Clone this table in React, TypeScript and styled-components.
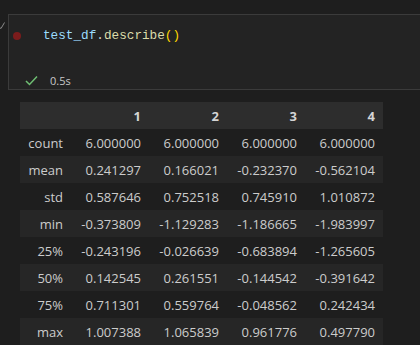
import React from 'react';
import styled, { createGlobalStyle } from 'styled-components';

const GlobalStyle = createGlobalStyle`
  html, body {
    margin: 0;
    padding: 0;
    background: #1e1e1e;
  }
`;

const Page = styled.div`
  position: relative;
  width: 420px;
  height: 345px;
  overflow: hidden;
  background: #1e1e1e;
  padding-top: 14px;
  box-sizing: border-box;
`;

const GutterMark = styled.svg`
  position: absolute;
  left: -2px;
  top: 21px;
`;

const Cell = styled.div`
  margin-left: 8px;
  height: 76px;
  box-sizing: border-box;
  border: 1px solid #3b3b3b;
  border-right: none;
  background: #232323;
  display: flex;
  flex-direction: column;
`;

const CodeRow = styled.div`
  display: flex;
  align-items: center;
  height: 16px;
  margin-top: 13px;
  padding-left: 4px;
`;

const RunDot = styled.span`
  width: 8px;
  height: 8px;
  border-radius: 50%;
  background: #7b1c1c;
  margin-right: 22px;
`;

const Code = styled.code`
  font-family: 'Liberation Mono', 'DejaVu Sans Mono', monospace;
  font-size: 12.7px;
  line-height: 16px;
  white-space: pre;
`;

const Token = styled.span<{ $color: string }>`
  color: ${(p) => p.$color};
`;

const StatusRow = styled.div`
  display: flex;
  align-items: center;
  height: 16px;
  margin-top: 28px;
  padding-left: 16px;
  gap: 12px;
`;

const Elapsed = styled.span`
  font-family: 'Open Sans', 'Noto Sans', sans-serif;
  font-size: 11px;
  color: #c8c8c8;
`;

const Output = styled.div`
  padding: 12px 0 0 20px;
`;

const Table = styled.table`
  border-collapse: collapse;
  font-family: 'Open Sans', 'Noto Sans', sans-serif;
  font-size: 13px;
  color: #cccccc;
`;

const HeadRow = styled.tr`
  background: #2d2d2d;
  height: 27px;
`;

const Row = styled.tr<{ $striped: boolean }>`
  background: ${(p) => (p.$striped ? '#262626' : 'transparent')};
  height: 27px;
`;

const Th = styled.th<{ $index?: boolean }>`
  text-align: right;
  font-weight: 700;
  color: #d4d4d4;
  padding: 0 8px;
  width: ${(p) => (p.$index ? '35px' : '62px')};
  vertical-align: middle;
`;

const Td = styled.td<{ $index?: boolean }>`
  text-align: right;
  padding: 0 8px;
  vertical-align: middle;
  white-space: nowrap;
`;

const columns = ['1', '2', '3', '4'];

const rows: [string, string[]][] = [
  ['count', ['6.000000', '6.000000', '6.000000', '6.000000']],
  ['mean', ['0.241297', '0.166021', '-0.232370', '-0.562104']],
  ['std', ['0.587646', '0.752518', '0.745910', '1.010872']],
  ['min', ['-0.373809', '-1.129283', '-1.186665', '-1.983997']],
  ['25%', ['-0.243196', '-0.026639', '-0.683894', '-1.265605']],
  ['50%', ['0.142545', '0.261551', '-0.144542', '-0.391642']],
  ['75%', ['0.711301', '0.559764', '-0.048562', '0.242434']],
  ['max', ['1.007388', '1.065839', '0.961776', '0.497790']],
];

const App: React.FC = () => {
  return (
    <Page>
      <GlobalStyle />
      <GutterMark width="8" height="8" viewBox="0 0 8 8">
        <path d="M1 6 L3 7.5 L6.5 1.5" stroke="#8a8a8a" strokeWidth="1" fill="none" />
      </GutterMark>
      <Cell>
        <CodeRow>
          <RunDot />
          <Code>
            <Token $color="#9cdcfe">test_df</Token>
            <Token $color="#d4d4d4">.</Token>
            <Token $color="#dcdcaa">describe</Token>
            <Token $color="#ffd700">()</Token>
          </Code>
        </CodeRow>
        <StatusRow>
          <svg width="13" height="11" viewBox="0 0 13 11">
            <path d="M1 6 L4.5 9.5 L12 1.5" stroke="#6fbf73" strokeWidth="1.5" fill="none" />
          </svg>
          <Elapsed>0.5s</Elapsed>
        </StatusRow>
      </Cell>
      <Output>
        <Table>
          <thead>
            <HeadRow>
              <Th $index />
              {columns.map((c) => (
                <Th key={c}>{c}</Th>
              ))}
            </HeadRow>
          </thead>
          <tbody>
            {rows.map(([name, values], i) => (
              <Row key={name} $striped={i % 2 === 1}>
                <Td $index>{name}</Td>
                {values.map((v, j) => (
                  <Td key={j}>{v}</Td>
                ))}
              </Row>
            ))}
          </tbody>
        </Table>
      </Output>
    </Page>
  );
};

export default App;
